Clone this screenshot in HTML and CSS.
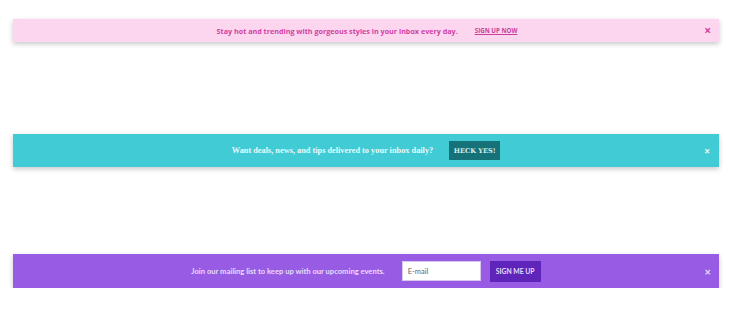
FILE: index.html
```html
<!DOCTYPE html>
<html lang="en">
<head>
    <meta charset="UTF-8">
    <title>Notification bars</title>
    <link rel="stylesheet" href="styles.css">
</head>
<body>
    <div class="bar bar-pink">
        <p class="bar_text">Stay hot and trending with gorgeous styles in your inbox every day.</p>
        <a href="#" class="link">SIGN UP NOW</a>
        <span class="close">&times;</span>
    </div>

    <div class="bar bar-teal">
        <p class="bar_text">Want deals, news, and tips delivered to your inbox daily?</p>
        <button class="btn">HECK YES!</button>
        <span class="close">&times;</span>
    </div>

    <div class="bar bar-purple">
        <p class="bar_text">Join our mailing list to keep up with our upcoming events.</p>
        <input type="text" class="email" placeholder="E-mail">
        <button class="btn">SIGN ME UP</button>
        <span class="close">&times;</span>
    </div>
</body>
</html>
```

FILE: styles.css
```css
*{
    margin:0;
    padding:0;
    box-sizing:border-box;
}
body{
    background:white;
    padding:19px 14px 0 13px;
    font-family:"Open Sans", sans-serif;
}
.bar{
    position:relative;
    display:flex;
    justify-content:center;
    align-items:center;
    box-shadow:0 2px 5px rgba(0,0,0,0.22);
}
.bar_text{
    font-weight:700;
}
.close{
    position:absolute;
    right:8px;
    top:50%;
    transform:translateY(-50%);
    font-size:11px;
    font-weight:700;
    line-height:1;
}

/* pink */
.bar-pink{
    height:23px;
    background:#fbd6ee;
    color:#d33fa3;
    font-size:7.2px;
    font-family:"Open Sans", sans-serif;
    padding-left:2px;
}
.bar-pink .link{
    margin-left:17px;
    color:#c9409c;
    font-size:6.2px;
    font-weight:700;
    text-decoration:underline;
}
.bar-pink .close{
    color:#d33fa3;
    font-size:12px;
}

/* teal */
.bar-teal{
    height:33px;
    margin-top:92px;
    background:#40cbd5;
    color:#e8fafb;
}
.bar-teal .bar_text{
    font-family:"Liberation Serif", serif;
    font-size:8.3px;
}
.bar-teal .btn{
    margin-left:16px;
    height:19px;
    width:51px;
    background:#167279;
    color:#d6eef0;
    border:none;
    font-family:"DejaVu Serif", serif;
    font-weight:700;
    font-size:6.6px;
}
.bar-teal .close{
    color:#e8fafb;
    font-size:10px;
    right:9px;
}

/* purple */
.bar-purple{
    height:34px;
    margin-top:87px;
    background:#985be3;
    color:#eadcfb;
    font-size:7.6px;
    font-family:"Lato", sans-serif;
}
.email{
    margin-left:17px;
    width:79px;
    height:20px;
    border:1px solid #d8c8ee;
    padding:0 5px;
    font-family:"Lato", sans-serif;
    font-size:7.5px;
    color:#555;
}
.email::placeholder{
    color:#666;
}
.bar-purple .btn{
    margin-left:9px;
    width:51px;
    height:21px;
    background:#5f24b9;
    color:#eadcfb;
    border:none;
    font-family:"Lato", sans-serif;
    font-weight:700;
    font-size:6.8px;
}
.bar-purple .close{
    color:#eadcfb;
}
```
